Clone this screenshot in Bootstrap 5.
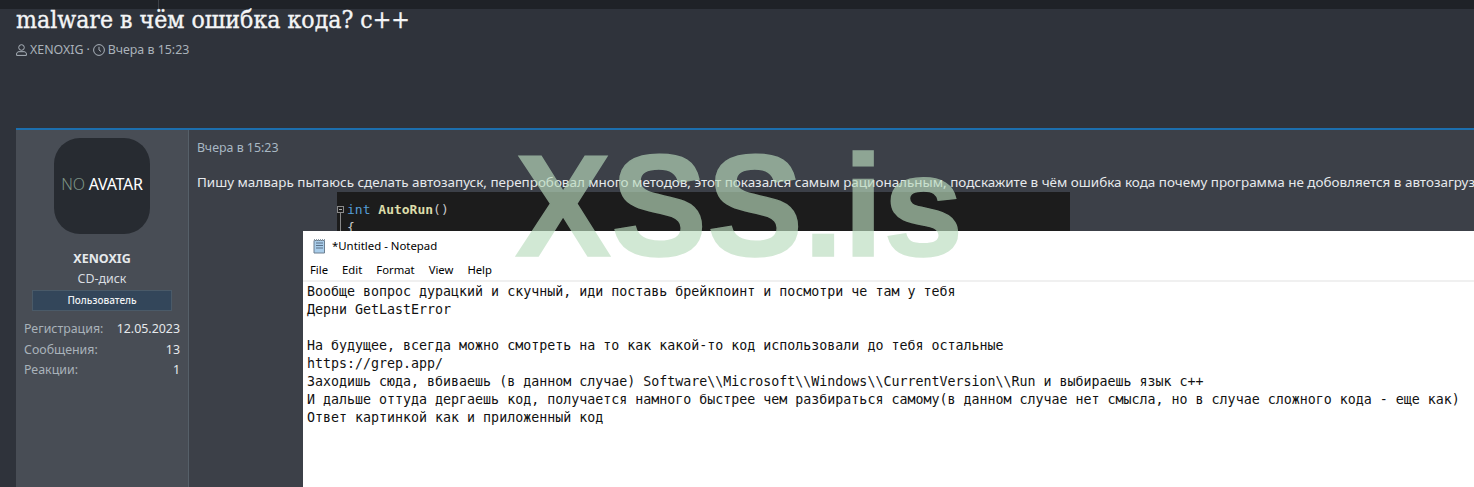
<!DOCTYPE html>
<html lang="ru"><head><meta charset="utf-8"><title>malware</title>
<link href="https://cdn.jsdelivr.net/npm/bootstrap@5.3.0/dist/css/bootstrap.min.css" rel="stylesheet">
<style>
html,body{height:487px;overflow:hidden}
body{background:#2f333b;font-family:"Noto Sans","Open Sans",sans-serif;font-size:13px;color:#dfe3e8;position:relative}
.topstrip{height:9px;background:#1f2227}
.topstrip i{display:block;margin-left:158px;width:1px;height:9px;background:#3c4046}
.thead-area{padding:0 16px;height:119px}
.ttl{font-family:"DejaVu Serif Condensed","DejaVu Serif",serif;font-stretch:condensed;font-size:24.6px;line-height:22px;color:#f4f5f6;font-weight:400;-webkit-text-stroke:.35px #f4f5f6;margin:0}
.meta{color:#aab2ba;font-size:12.4px;line-height:16px;margin-top:11px;gap:3px}
.meta svg{flex:none}
.postcard{margin-left:16px;border-top:2px solid #1c6fae;height:359px;width:1458px;background:#3c4048}
.ucol{width:173px;flex:none;background:#484d55;border-right:1px solid #566069;padding:8px 8px 0}
.ava{width:96px;height:96px;border-radius:26px;background:#272b31;color:#fff;font-size:16px;letter-spacing:-.25px;padding-bottom:4px}
.ava span{color:#7d9486;font-weight:300}
.uname{font-weight:700;font-size:12.5px;color:#e6e9ec;margin-top:15px;line-height:20px}
.utitle{font-size:12.4px;color:#d8dce0;line-height:18px;margin-top:1px}
.ubadge{background:#33465a;border:1px solid #4a5a68;color:#f0f2f4;font-size:10px;line-height:19px;font-weight:500;margin:2px 8px 0 8px;height:21px}
.ustats{font-size:12.4px;margin-top:8px}
.ustats>div{line-height:20.5px}
.ustats span{color:#a9b2ba}
.ustats b{font-weight:400;color:#e6e9ec}
.pbody{padding:9px 8px;min-width:0}
.pdate{color:#a9b8c4;font-size:12.4px;line-height:17px}
.ptext{white-space:nowrap;font-size:13.44px;line-height:18px;color:#e6e9ec;margin-top:17px}
.codeimg{margin:1px 0 0 140px;width:733px;height:160px;background:#1c1c1c;font-family:"DejaVu Sans Mono",monospace;font-size:13px;color:#c8c8c8;padding:9px 0 0 10px;line-height:18px}
.codeimg em{font-style:normal;color:#569cd6}
.codeimg u{text-decoration:none;color:#dcdcaa;font-weight:700}
.foldmark{width:7px;height:7px;border:1px solid #8a8a8a;left:0;top:14px}
.foldmark::after{content:"";position:absolute;left:1px;top:2px;width:3px;height:1px;background:#aaa}
.foldmark::before{content:"";position:absolute;left:2px;top:6px;width:1px;height:30px;background:#8a8a8a}
.npad{position:absolute;left:303px;top:231px;width:1171px;height:256px;background:#fff;color:#000;font-family:"Noto Sans",sans-serif}
.nptitle{height:29px;padding-left:9px;font-size:11.4px;line-height:29px}
.npmenu{height:20px;font-size:11.3px;line-height:20px;padding-left:7px;border-bottom:2px solid #f0f0f0;margin-top:0;box-sizing:content-box}
.npmenu span{margin-right:14px}
.nptxt{font-family:"DejaVu Sans Mono",monospace;font-size:13.31px;line-height:18px;white-space:pre;padding:1px 0 0 4px;color:#111}
.wmark{position:absolute;left:515px;top:122px;font-family:"Liberation Sans",sans-serif;font-weight:700;font-size:144px;line-height:170px;color:#badcbe;opacity:.65;-webkit-text-stroke:1.5px #badcbe;pointer-events:none;white-space:nowrap}
</style></head><body>
<div class="topstrip"><i></i></div>
<div class="thead-area">
<h1 class="ttl">malware в чём ошибка кода? c++</h1>
<div class="meta d-flex align-items-center"><svg width="11" height="12" viewBox="0 0 11 12" fill="none" stroke="#aab2ba"><circle cx="5.5" cy="3.5" r="2.8"/><path d="M.6 11.400V10c0-1.400 1-2.300 2.400-2.300h5c1.400 0 2.400.900 2.400 2.300v1.400z"/></svg><span>XENOXIG</span><span>·</span><svg width="12" height="12" viewBox="0 0 12 12" fill="none" stroke="#aab2ba"><circle cx="6" cy="6" r="5.400"/><path d="M6 2.800V6l2 1.500"/></svg><span>Вчера в 15:23</span></div>
</div>
<div class="postcard d-flex">
<div class="ucol text-center">
<div class="ava mx-auto d-flex align-items-center justify-content-center"><span>NO</span>&nbsp;AVATAR</div>
<div class="uname">XENOXIG</div>
<div class="utitle">CD-диск</div>
<div class="ubadge">Пользователь</div>
<div class="ustats text-start">
<div class="d-flex justify-content-between"><span>Регистрация:</span><b>12.05.2023</b></div>
<div class="d-flex justify-content-between"><span>Сообщения:</span><b>13</b></div>
<div class="d-flex justify-content-between"><span>Реакции:</span><b>1</b></div>
</div>
</div>
<div class="pbody flex-grow-1">
<div class="pdate">Вчера в 15:23</div>
<div class="ptext">Пишу малварь пытаюсь сделать автозапуск, перепробовал много методов, этот показался самым рациональным, подскажите в чём ошибка кода почему программа не добовляется в автозагрузку</div>
<div class="codeimg position-relative"><i class="foldmark position-absolute"></i><em>int</em> <u>AutoRun</u>()<br>{</div>
</div>
</div>
<div class="npad">
<div class="nptitle d-flex align-items-center gap-1"><svg width="16" height="16" viewBox="0 0 16 16"><path d="M2 2.500h10.500v12.500H2z" fill="#a9cdea" stroke="#6c7f90"/><path d="M4 5h7M4 7.500h7M4 10h7" stroke="#5a7188"/><path d="M2 2h11" stroke="#8a9aa8" stroke-width="2" stroke-dasharray="1 1"/></svg><span>*Untitled - Notepad</span></div>
<div class="npmenu"><span>File</span><span>Edit</span><span>Format</span><span>View</span><span>Help</span></div>
<div class="nptxt">Вообще вопрос дурацкий и скучный, иди поставь брейкпоинт и посмотри че там у тебя
Дерни GetLastError

На будущее, всегда можно смотреть на то как какой-то код использовали до тебя остальные
https://grep.app/
Заходишь сюда, вбиваешь (в данном случае) Software\\Microsoft\\Windows\\CurrentVersion\\Run и выбираешь язык c++
И дальше оттуда дергаешь код, получается намного быстрее чем разбираться самому(в данном случае нет смысла, но в случае сложного кода - еще как)
Ответ картинкой как и приложенный код</div>
</div>
<div class="wmark">XSS.is</div>
<script src="https://cdn.jsdelivr.net/npm/bootstrap@5.3.0/dist/js/bootstrap.bundle.min.js"></script>
</body></html>
